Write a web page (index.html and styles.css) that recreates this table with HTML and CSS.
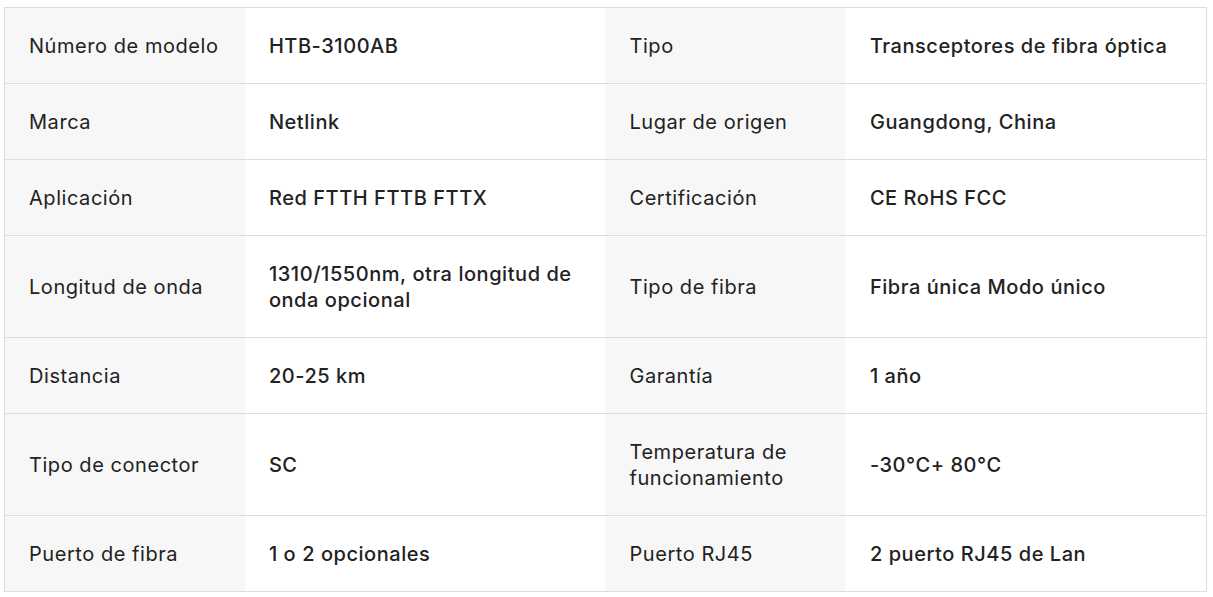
FILE: index.html
```html
<!DOCTYPE html>
<html lang="es">
<head>
<meta charset="utf-8">
<title>Especificaciones</title>
<link rel="stylesheet" href="styles.css">
</head>
<body>
<div class="wrap">
<table class="spec">
<colgroup><col class="c-label"><col class="c-value"><col class="c-label"><col class="c-value"></colgroup>
<tbody>
<tr><td class="label">Número de modelo</td><td class="value">HTB-3100AB</td><td class="label">Tipo</td><td class="value">Transceptores de fibra óptica</td></tr>
<tr><td class="label">Marca</td><td class="value">Netlink</td><td class="label">Lugar de origen</td><td class="value">Guangdong, China</td></tr>
<tr><td class="label">Aplicación</td><td class="value">Red FTTH FTTB FTTX</td><td class="label">Certificación</td><td class="value">CE RoHS FCC</td></tr>
<tr><td class="label">Longitud de onda</td><td class="value">1310/1550nm, otra longitud de onda opcional</td><td class="label">Tipo de fibra</td><td class="value">Fibra única Modo único</td></tr>
<tr><td class="label">Distancia</td><td class="value">20-25 km</td><td class="label">Garantía</td><td class="value">1 año</td></tr>
<tr><td class="label">Tipo de conector</td><td class="value">SC</td><td class="label">Temperatura de funcionamiento</td><td class="value">-30°C+ 80°C</td></tr>
<tr><td class="label">Puerto de fibra</td><td class="value">1 o 2 opcionales</td><td class="label">Puerto RJ45</td><td class="value">2 puerto RJ45 de Lan</td></tr>
</tbody>
</table>
</div>
</body>
</html>
```
FILE: styles.css
```css
html, body {
  margin: 0;
  padding: 0;
  background: #ffffff;
}
.wrap {
  padding: 7px 6px 0 4px;
}
.spec {
  width: 1203px;
  border-collapse: collapse;
  table-layout: fixed;
  border: 1px solid #dddddd;
  font-family: Inter, "Noto Sans", sans-serif;
  font-size: 20px;
  line-height: 26px;
  letter-spacing: 0.55px;
  color: #222222;
}
.c-label { width: 20%; }
.c-value { width: 30%; }
.spec td {
  padding: 25px 24px 24px 24px;
  border-bottom: 1px solid #dddddd;
  vertical-align: middle;
  text-align: left;
}
.spec .label {
  background: #f7f7f7;
  font-weight: 400;
}
.spec .value {
  background: #ffffff;
  font-weight: 500;
}
```
